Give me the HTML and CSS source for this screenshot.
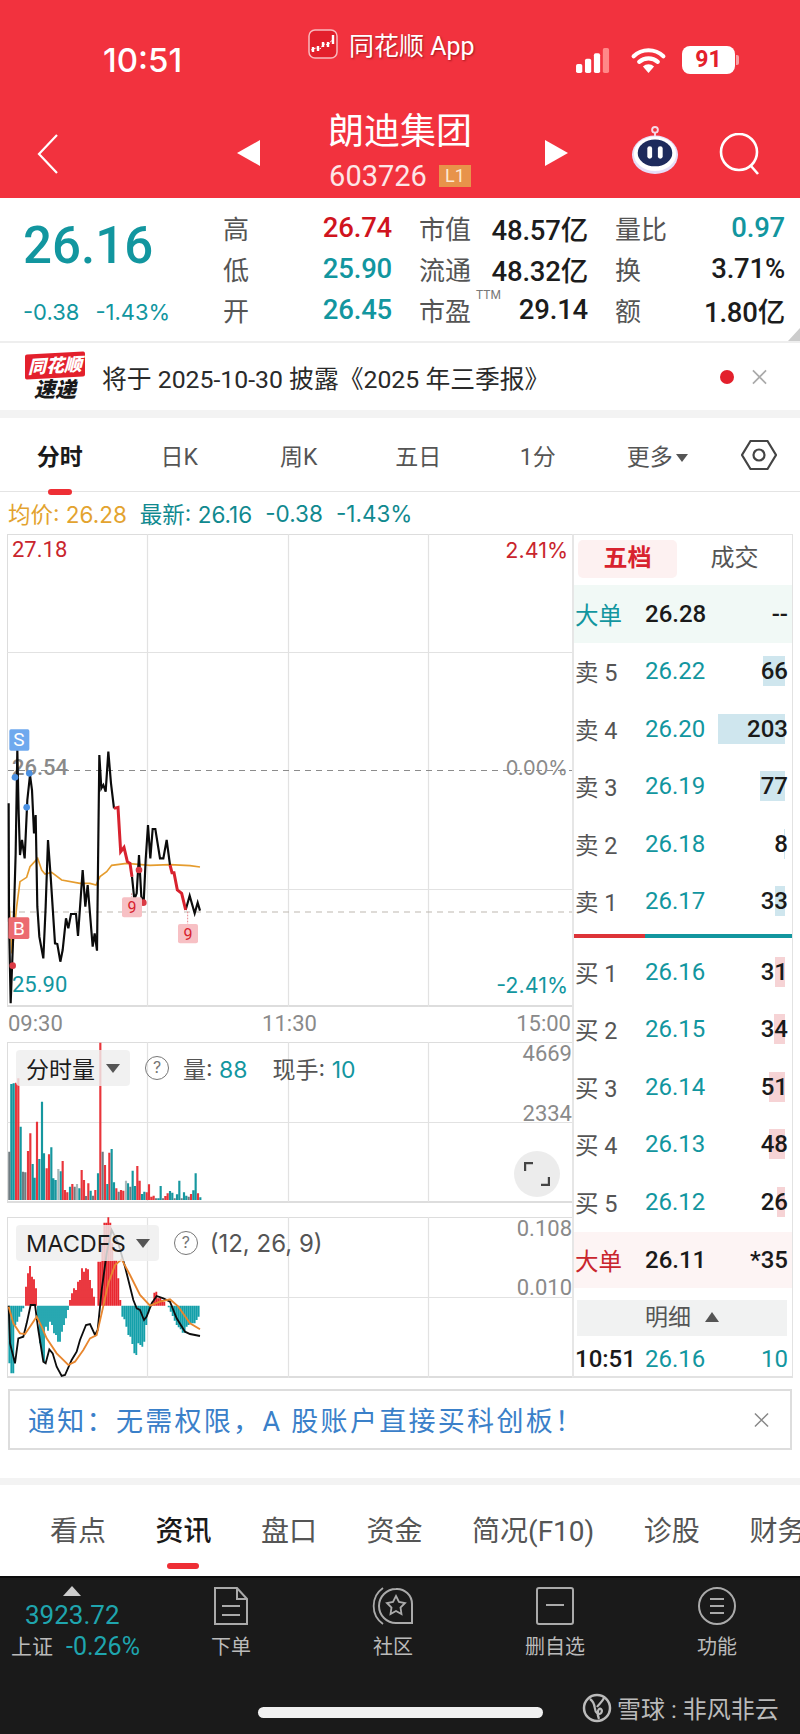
FILE: index.html
```html
<!DOCTYPE html>
<html lang="zh">
<head>
<meta charset="utf-8">
<title>朗迪集团</title>
<link rel="stylesheet" href="styles.css">
</head>
<body>
<div class="page">
<header class="head">
  <div class="status">
    <span class="time">10:51</span>
    <div class="app">
      <svg class="app-icon" viewBox="0 0 30 30"><rect x="1" y="1" width="28" height="28" rx="6" fill="#e3202c" stroke="#f9b9bd" stroke-width="1.5"/><path d="M3 21l5-2 4 1 4-5 4 1 5-6" fill="none" stroke="#fff" stroke-width="1" stroke-dasharray="2 1"/><path d="M5 18v5M10 17v5M15 13v5M20 13v5M25 6v9" stroke="#fff" stroke-width="2.4"/></svg>
      <span>同花顺 App</span>
    </div>
    <div class="sys">
      <svg class="signal" viewBox="0 0 38 28"><rect x="0" y="18" width="7" height="10" rx="2" fill="#fff"/><rect x="10" y="12" width="7" height="16" rx="2" fill="#fff"/><rect x="20" y="6" width="7" height="22" rx="2" fill="#fff"/><rect x="30" y="0" width="7" height="28" rx="2" fill="#f88"/></svg>
      <svg class="wifi" viewBox="0 0 36 28"><path d="M2 10a23 23 0 0 1 32 0M8 16a15 15 0 0 1 20 0" fill="none" stroke="#fff" stroke-width="4.5" stroke-linecap="round"/><path d="M18 28l-6-7a9 9 0 0 1 12 0z" fill="#fff"/></svg>
      <div class="batt"><span class="batt-body">91</span><span class="batt-tip"></span></div>
    </div>
  </div>
  <div class="nav">
    <svg class="back" viewBox="0 0 22 40"><path d="M20 1L2 20l18 19" fill="none" stroke="#fff" stroke-width="2.2"/></svg>
    <svg class="tri tri-l" viewBox="0 0 23 26"><path d="M23 0v26L0 13z" fill="#fff"/></svg>
    <div class="title">
      <div class="name">朗迪集团</div>
      <div class="code"><span>603726</span><b class="l1">L1</b></div>
    </div>
    <svg class="tri tri-r" viewBox="0 0 23 26"><path d="M0 0v26l23-13z" fill="#fff"/></svg>
    <svg class="robot" viewBox="0 0 50 50"><circle cx="25" cy="4" r="3" fill="none" stroke="#f5d8e6" stroke-width="2"/><path d="M25 7v4" stroke="#f5d8e6" stroke-width="2"/><ellipse cx="25" cy="30" rx="24" ry="20" fill="#e6def8"/><ellipse cx="25" cy="29" rx="22" ry="18" fill="#fff"/><ellipse cx="25" cy="28" rx="18" ry="14" fill="#1d2a5c"/><rect x="17" y="21" width="5" height="13" rx="2.5" fill="#fff"/><rect x="28" y="21" width="5" height="13" rx="2.5" fill="#fff"/></svg>
    <svg class="search" viewBox="0 0 42 42"><circle cx="20" cy="19" r="18" fill="none" stroke="#fff" stroke-width="2.6"/><path d="M32 33l7 8" stroke="#fff" stroke-width="2.6"/></svg>
  </div>
</header>

<section class="quote">
  <div class="last">
    <div class="big">26.16</div>
    <div class="chg"><span>-0.38</span><span>-1.43%</span></div>
  </div>
  <div class="stats">
    <div class="st"><i>高</i><b class="red">26.74</b></div>
    <div class="st"><i>市值</i><b>48.57亿</b></div>
    <div class="st"><i>量比</i><b class="teal">0.97</b></div>
    <div class="st"><i>低</i><b class="teal">25.90</b></div>
    <div class="st"><i>流通</i><b>48.32亿</b></div>
    <div class="st"><i>换</i><b>3.71%</b></div>
    <div class="st"><i>开</i><b class="teal">26.45</b></div>
    <div class="st"><i>市盈<sup class="ttm">TTM</sup></i><b>29.14</b></div>
    <div class="st"><i>额</i><b>1.80亿</b></div>
  </div>
  <span class="corner"></span>
</section>

<section class="notice">
  <div class="logo"><span class="logo-top">同花顺</span><span class="logo-bot">速递</span></div>
  <div class="notice-text">将于 2025-10-30 披露《2025 年三季报》</div>
  <span class="dot"></span>
  <svg class="x x-grey" viewBox="0 0 16 16"><path d="M1 1l14 14M15 1L1 15" stroke="#aaa" stroke-width="1.8"/></svg>
</section>

<nav class="tabs">
  <div class="tab on">分时</div>
  <div class="tab">日K</div>
  <div class="tab">周K</div>
  <div class="tab">五日</div>
  <div class="tab">1分</div>
  <div class="tab">更多<span class="caret-s"></span></div>
  <svg class="hex" viewBox="0 0 36 32"><path d="M9.500 2h17L35 16l-8.500 14h-17L1 16z" fill="none" stroke="#444" stroke-width="2.200"/><circle cx="18" cy="16" r="5.500" fill="none" stroke="#444" stroke-width="2.200"/></svg>
</nav>

<div class="avg"><span class="orange">均价: 26.28</span><span class="tl">最新: 26.16</span><span class="tl">-0.38</span><span class="tl">-1.43%</span></div>

<main class="main">
  <div class="left">
    <div class="chart pc">
      <svg class="plot" viewBox="0 0 565 473" width="565" height="473">
        <g transform="translate(-7,-534)" fill="none">
          <path d="M147.500 534V1007M288.500 534V1007M428.500 534V1007M7 652.500H572M7 889.500H572" stroke="#e2e2e2" stroke-width="1.200"/>
          <path d="M8 770.500H572" stroke="#8c8c8c" stroke-width="1.200" stroke-dasharray="6 5"/>
          <path d="M8 912H572" stroke="#bdb8b0" stroke-width="1.200" stroke-dasharray="6 5"/>
        </g>
        <text class="l-gray" x="5" y="241">26.54</text>
        <g transform="translate(-7,186) scale(.33333)" fill="none">
          <path d="M28 560L36 700L50 560L60 485L80 472L90 440L113 415L125 450L135 462L155 457L185 480L240 490L270 490L288 495L300 470L320 455L335 436L380 430L450 436L510 434L570 437L600 441" stroke="#e59c2e" stroke-width="5"/>
          <path d="M26 250L27 600L32 850L40 640L47 400L52 90L56 280L60 405L66 360L74 415L82 240L90 165L96 210L102 340L107 285L112 560L118 650L130 715L137 560L144 360L152 470L165 670L172 672L181 725L188 690L198 595L205 625L213 582L228 582L234 648L248 450L256 560L263 495L278 680L284 640L291 692L298 105L304 205L310 195L317 215L325 95L333 190L342 265M396 470L403 538L410 520L417 405L424 530L431 548L437 420L444 315L451 415L458 327L466 327L480 415L490 415L500 360L510 435M557 570L569 527L584 580L593 548L600 572" stroke="#0b0b0b" stroke-width="6.500"/>
          <path d="M342 265L354 262L362 395L372 382L382 425L390 430L396 470M510 435L516 458L522 458L532 510L545 520L557 570" stroke="#d8222e" stroke-width="9"/>
          <path d="M563 575V612M395 520V532" stroke="#e8858c" stroke-width="3" stroke-dasharray="5 4"/>
          <g fill="#4a90e2"><circle cx="45" cy="172" r="10"/><circle cx="88" cy="160" r="10"/><circle cx="80" cy="262" r="10"/></g>
          <g fill="#da3a44"><circle cx="38" cy="737" r="10"/><circle cx="417" cy="450" r="10"/><circle cx="430" cy="548" r="10"/></g>
          <rect x="28" y="28" width="60" height="64" rx="5" fill="#6fa9ee"/>
          <rect x="25" y="592" width="63" height="65" rx="5" fill="#ec6b70"/>
          <rect x="366" y="532" width="60" height="60" rx="6" fill="#f7c0c4"/>
          <rect x="534" y="612" width="60" height="58" rx="6" fill="#f7c0c4"/>
        </g>
        <text class="mk" x="12" y="212">S</text>
        <text class="mk" x="12" y="401">B</text>
        <text class="nine" x="125" y="379">9</text>
        <text class="nine" x="181" y="406">9</text>
      </svg>
      <span class="lb lb-tl red2">27.18</span>
      <span class="lb lb-bl tl">25.90</span>
      <span class="lb wide lb-tr red2">2.41%</span>
      <span class="lb wide lb-mr gr">0.00%</span>
      <span class="lb wide lb-br tl">-2.41%</span>
    </div>
    <div class="times"><span>09:30</span><span>11:30</span><span>15:00</span></div>
    <div class="chart vc">
      <svg class="plot" viewBox="0 0 565 161" width="565" height="161">
        <g transform="translate(-7,-1042)"><path d="M147.500 1042V1202M288.500 1042V1202M428.500 1042V1202M7 1122.500H572" stroke="#e2e2e2" stroke-width="1.200" fill="none"/></g>
        <g transform="translate(-7,-12) scale(.33333)" fill="none" stroke-width="6.500">
          <path stroke="#e9353b" d="M48 510V158M55 510V145M84 510V363M91 510V310M111 510V275M140 510V415M147 510V373M188 510V393M195 510V480M202 510V487M217 510V462M245 510V420M252 510V450M265 510V460M286 510V480M301 510V38M315 510V405M328 510V368M349 510V475M363 510V480M370 510V482M412 510V408M419 510V452M440 510V487M447 510V463M454 510V500M461 510V497M496 510V498M503 510V490M573 510V492M594 510V490"/>
          <path stroke="#16979f" d="M34 510V162M41 510V160M62 510V290M98 510V402M104 510V443M118 510V387M126 510V215M132 510V370M154 510V352M160 510V445M167 510V450M182 510V424M210 510V470M238 510V475M272 510V482M294 510V430M322 510V462M335 510V357M342 510V457M384 510V460M398 510V422M405 510V468M426 510V492M433 510V485M475 510V505M482 510V468M510 510V483M517 510V488M531 510V493M538 510V452M552 510V487M559 510V497M580 510V481M587 510V430M601 510V502"/>
          <path stroke="#6f7b80" d="M28 510V365M69 510V425M76 510V427M224 510V470M258 510V498M279 510V497M308 510V365M356 510V485M391 510V470M468 510V505M489 510V505M524 510V505M545 510V505M566 510V500"/>
          <path stroke="#a9b8ba" d="M175 510V417M231 510V462M378 510V452"/>
        </g>
      </svg>
      <div class="ctl ctl-v">
        <div class="chip">分时量<span class="caret"></span></div>
        <span class="help">?</span>
        <span>量: <em class="tl">88</em></span>
        <span class="ml">现手: <em class="tl">10</em></span>
      </div>
      <span class="lb lb-v1 gr">4669</span>
      <span class="lb lb-v2 gr">2334</span>
      <div class="full"><svg viewBox="0 0 26 24" width="26" height="24"><path d="M1 9V1h8M25 15v8h-8" fill="none" stroke="#444" stroke-width="2.400"/></svg></div>
    </div>
    <div class="chart mc">
      <svg class="plot" viewBox="0 0 565 161" width="565" height="161">
        <g transform="translate(-7,-1217)"><path d="M147.500 1217V1378M288.500 1217V1378M7 1297.500H572M428.500 1217V1378" stroke="#e2e2e2" stroke-width="1.200" fill="none"/></g>
        <g transform="translate(-7,-7) scale(.33333)" fill="none" stroke-width="5.500">
          <path stroke="#14a0aa" d="M28 287V460M34 287V490M40 287V490M46 287V345M52 287V335M58 287V320M64 287V305M70 287V295M114 287V330M120 287V400M126 287V430M132 287V455M138 287V350M144 287V362M150 287V335M156 287V345M162 287V370M168 287V375M174 287V395M180 287V395M186 287V365M192 287V345M198 287V325M204 287V300M367 287V320M373 287V328M379 287V350M385 287V375M391 287V380M397 287V402M403 287V430M409 287V435M415 287V400M421 287V405M427 287V410M433 287V395M439 287V345M445 287V310M451 287V292M506 287V292M512 287V305M518 287V318M524 287V332M530 287V345M536 287V352M542 287V358M548 287V368M554 287V368M560 287V350M566 287V345M572 287V340M578 287V340M584 287V340M590 287V330M596 287V320"/>
          <path stroke="#e9272f" d="M78 287V230M84 287V190M90 287V168M96 287V200M102 287V208M108 287V235M210 287V270M216 287V250M222 287V235M228 287V240M234 287V215M240 287V210M246 287V175M252 287V185M258 287V175M264 287V178M270 287V210M276 287V235M282 287V260M295 287V155M301 287V155M307 287V100M313 287V38M319 287V38M325 287V22M331 287V38M337 287V100M343 287V150M349 287V150M355 287V205M361 287V270M457 287V275M463 287V248M469 287V245M475 287V265M481 287V262M487 287V270M493 287V275"/>
          <path stroke="#0d0d0d" stroke-width="5.500" d="M26 287L30 400L45 460L55 385L70 380L80 340L92 285L105 285L115 360L130 455L137 460L148 418L158 430L170 470L185 498L195 495L215 450L230 425L240 390L258 345L270 342L285 375L293 360L305 240L320 130L335 60L355 100L375 170L400 270L410 295L420 300L432 330L440 320L455 280L470 258L490 265L510 275L530 325L555 365L570 372L585 375L600 378"/>
          <path stroke="#e8862e" stroke-width="5.500" d="M26 290L40 340L60 370L75 372L90 350L110 320L125 350L140 385L170 430L205 465L225 455L250 420L270 385L290 375L305 310L325 220L345 165L365 148L390 195L420 255L450 287L480 275L510 268L535 290L570 340L600 358"/>
        </g>
      </svg>
      <div class="ctl ctl-m">
        <div class="chip chip-m">MACDFS<span class="caret"></span></div>
        <span class="help">?</span>
        <span class="params">(12, 26, 9)</span>
      </div>
      <span class="lb lb-m1 gr">0.108</span>
      <span class="lb lb-m2 gr">0.010</span>
    </div>
  </div>

  <aside class="book">
    <div class="book-tabs"><div class="bt on">五档</div><div class="bt">成交</div></div>
    <div class="row big-g"><span class="tl">大单</span><b class="k">26.28</b><b class="k v">--</b></div>
    <div class="row"><span>卖 5</span><b class="tl">26.22</b><b class="k v"><u class="bar sell b66"></u>66</b></div>
    <div class="row"><span>卖 4</span><b class="tl">26.20</b><b class="k v"><u class="bar sell b203"></u>203</b></div>
    <div class="row"><span>卖 3</span><b class="tl">26.19</b><b class="k v"><u class="bar sell b77"></u>77</b></div>
    <div class="row"><span>卖 2</span><b class="tl">26.18</b><b class="k v"><u class="bar sell b8"></u>8</b></div>
    <div class="row"><span>卖 1</span><b class="tl">26.17</b><b class="k v"><u class="bar sell b33"></u>33</b></div>
    <div class="split"><i></i><i></i></div>
    <div class="row"><span>买 1</span><b class="tl">26.16</b><b class="k v"><u class="bar buy b31"></u>31</b></div>
    <div class="row"><span>买 2</span><b class="tl">26.15</b><b class="k v"><u class="bar buy b34"></u>34</b></div>
    <div class="row"><span>买 3</span><b class="tl">26.14</b><b class="k v"><u class="bar buy b51"></u>51</b></div>
    <div class="row"><span>买 4</span><b class="tl">26.13</b><b class="k v"><u class="bar buy b48"></u>48</b></div>
    <div class="row"><span>买 5</span><b class="tl">26.12</b><b class="k v"><u class="bar buy b26"></u>26</b></div>
    <div class="row big-r"><span class="red2">大单</span><b class="k">26.11</b><b class="k v">*35</b></div>
    <div class="detail">明细<span class="caret-up"></span></div>
    <div class="row last-r"><b class="k">10:51</b><b class="tl">26.16</b><b class="tl v">10</b></div>
  </aside>
</main>

<div class="alert">
  <span class="alert-text">通知：无需权限，A 股账户直接买科创板！</span>
  <svg class="x" viewBox="0 0 16 16"><path d="M1 1l14 14M15 1L1 15" stroke="#888" stroke-width="1.600"/></svg>
</div>

<div class="band2"></div>

<nav class="tabs2">
  <span>看点</span><span class="on">资讯</span><span>盘口</span><span>资金</span><span>简况(F10)</span><span>诊股</span><span>财务</span>
</nav>

<footer class="foot">
  <div class="foot-top">
    <div class="index">
      <span class="up"></span>
      <div class="idx-num">3923.72</div>
      <div class="idx-row"><span>上证</span><b>-0.26%</b></div>
    </div>
    <div class="fitem">
      <svg viewBox="0 0 36 38" width="36" height="38"><path d="M2 1h22l10 11v25H2zM24 1v11h10M9 19h18M9 28h18" fill="none" stroke="#aaa" stroke-width="2"/></svg>
      <span>下单</span>
    </div>
    <div class="fitem">
      <svg viewBox="0 0 42 38" width="42" height="38"><path d="M11 1a22 22 0 0 0 0 36" fill="none" stroke="#aaa" stroke-width="1.800"/><path d="M24 2a15 15 0 0 1 16 15v19H24a17 17 0 0 1 0-34z" fill="none" stroke="#aaa" stroke-width="2"/><path d="M24 9l3 6 6 1-4.500 4.500 1 6.500-5.500-3-5.500 3 1-6.500L15 16l6-1z" fill="none" stroke="#aaa" stroke-width="1.800"/></svg>
      <span>社区</span>
    </div>
    <div class="fitem">
      <svg viewBox="0 0 38 38" width="38" height="38"><rect x="1" y="1" width="36" height="36" rx="2" fill="none" stroke="#aaa" stroke-width="2"/><path d="M10 18h18" stroke="#aaa" stroke-width="2"/></svg>
      <span>删自选</span>
    </div>
    <div class="fitem">
      <svg viewBox="0 0 38 38" width="38" height="38"><circle cx="19" cy="19" r="18" fill="none" stroke="#aaa" stroke-width="2"/><path d="M12 12h14M12 19h14M12 26h14" stroke="#aaa" stroke-width="2"/></svg>
      <span>功能</span>
    </div>
  </div>
  <div class="foot-bot">
    <div class="home"></div>
    <div class="mark">
      <svg viewBox="0 0 30 30" width="30" height="30"><circle cx="15" cy="15" r="13" fill="none" stroke="#bbb" stroke-width="2.500"/><path d="M8 6c7 5 3 11 7 14s6-2 4-4-5 3-2 10M22 5c-2 4-5 6-7 9" fill="none" stroke="#bbb" stroke-width="2.200"/></svg>
      <span>雪球 : 非风非云</span>
    </div>
  </div>
</footer>
</div>
</body>
</html>
```

FILE: styles.css
```css
* { box-sizing: border-box; }
html, body { margin: 0; padding: 0; background: #fff; }
body { font-family: Roboto, "Noto Sans CJK SC", sans-serif; color: #1c1c1c; }
.page { width: 800px; height: 1734px; overflow: hidden; position: relative; }
i, em, u { font-style: normal; text-decoration: none; }

.red { color: #d0141e; }
.red2 { color: #c9252d; }
.teal, .tl { color: #12969f; }
.gr { color: #8a8a8a; }
.orange { color: #e3a32f; }

/* header */
.head { background: #f2323e; height: 198px; color: #fff; }
.status { height: 112px; padding: 8px 0 0 103px; display: flex; align-items: center; }
.time { font-size: 33px; font-weight: 500; width: 205px; font-family: Inter, sans-serif; }
.app { display: flex; align-items: center; gap: 11px; font-size: 25px; margin-bottom: 32px; width: 265px; text-shadow: 1px 1px 2px rgba(90,0,0,.5); }
.app-icon { width: 30px; height: 30px; }
.sys { display: flex; align-items: center; gap: 17px; }
.signal { width: 40px; height: 25px; }
.wifi { width: 37px; height: 26px; }
.batt { display: flex; align-items: center; gap: 1px; margin-left: -2px; }
.batt-body { width: 53px; height: 28px; background: #fff; border-radius: 8px; color: #e3202c; font-size: 23px; font-weight: 700; line-height: 28px; text-align: center; }
.batt-tip { width: 3px; height: 10px; background: #f7a0a5; border-radius: 0 2px 2px 0; }

.nav { height: 86px; display: flex; align-items: flex-start; }
.back { width: 22px; height: 40px; margin: 22px 0 0 37px; }
.tri { width: 23px; height: 26px; margin-top: 28px; }
.tri-l { margin-left: 178px; }
.title { width: 285px; text-align: center; }
.name { font-size: 36px; line-height: 40px; margin-left: -5px; }
.code { display: flex; justify-content: center; align-items: center; gap: 12px; margin: 7px 0 0 -5px; font-size: 29px; color: #fde6e7; height: 34px; }
.l1 { width: 32px; height: 22px; background: #e8934a; color: #fde9d4; font-size: 18px; font-weight: 400; line-height: 22px; text-align: center; }
.robot { width: 50px; height: 48px; margin: 14px 0 0 62px; }
.search { width: 42px; height: 42px; margin: 21px 0 0 39px; }

/* quote */
.quote { height: 145px; border-bottom: 2px solid #eee; display: flex; position: relative; }
.last { width: 223px; padding: 18px 0 0 23px; }
.big { font-size: 51px; font-weight: 500; color: #12969f; line-height: 60px; }
.chg { display: flex; gap: 16px; margin-top: 22px; color: #12969f; font-size: 22px; line-height: 28px; font-family: Inter, sans-serif; }
.stats { display: grid; grid-template-columns: 169px 169px 170px; column-gap: 27px; grid-auto-rows: 41px; padding-top: 9px; }
.st { display: flex; justify-content: space-between; align-items: center; font-size: 25px; }
.st i { color: #555; font-size: 26px; position: relative; }
.st b { font-weight: 500; font-size: 27.500px; letter-spacing: -.2px; }
.ttm { position: absolute; left: 57px; top: -3px; font-size: 12px; line-height: 14px; color: #777; }
.corner { position: absolute; right: 0; bottom: 0; border-style: solid; border-width: 0 0 13px 12px; border-color: transparent transparent #ccc transparent; }

/* notice */
.notice { height: 67px; display: flex; align-items: center; padding-left: 25px; }
.logo { width: 60px; display: flex; flex-direction: column; align-items: center; font-style: italic; font-weight: 900; line-height: 1; }
.logo-top { background: #e3202c; color: #fff; font-size: 18px; width: 60px; height: 25px; line-height: 25px; text-align: center; border-radius: 2px; transform: skewY(-3deg); }
.logo-bot { font-size: 21px; margin-top: 2px; color: #1a1a1a; }
.notice-text { margin-left: 17px; font-size: 24.800px; width: 618px; white-space: nowrap; color: #2a2a2a; }
.dot { width: 14px; height: 14px; border-radius: 50%; background: #e3202c; }
.x { width: 15px; height: 16px; }
.x-grey { margin-left: 18px; }

/* tabs */
.tabs { height: 82px; border-top: 8px solid #f3f3f3; border-bottom: 1px solid #e4e4e4; display: flex; align-items: center; }
.tab { width: 119.500px; text-align: center; font-size: 23px; color: #555; position: relative; }
.tab.on { color: #1a1a1a; font-weight: 700; }
.tab.on::after { content: ""; position: absolute; left: 48px; bottom: -23px; width: 24px; height: 6px; border-radius: 3px; background: #ee2f35; }
.caret-s { display: inline-block; border: 6px solid transparent; border-top: 8px solid #555; border-bottom: 0; margin-left: 3px; vertical-align: 3px; }
.hex { width: 36px; height: 32px; margin-left: 24px; }

.avg { height: 42px; display: flex; align-items: center; padding-left: 8px; font-family: Inter, "Noto Sans CJK SC", sans-serif; font-size: 22.500px; gap: 13px; }
.avg .tl { color: #10898f; }

/* main */
.main { display: flex; padding-left: 7px; height: 844px; }
.left { width: 565px; }
.chart { position: relative; }
.plot { display: block; }
.pc { height: 473px; border-top: 1.500px solid #ddd; border-left: 1.500px solid #ddd; border-bottom: 2px solid #ddd; }
.pc .plot { margin: -1.500px 0 0 -1.500px; }
.vc { height: 161px; margin-top: 2px; border-top: 1.500px solid #ddd; border-left: 1.500px solid #ddd; border-bottom: 2px solid #ddd; }
.vc .plot { margin: -1.500px 0 0 -1.500px; }
.mc { height: 161px; margin-top: 14px; border-top: 1.500px solid #ddd; border-left: 1.500px solid #ddd; border-bottom: 2px solid #ddd; }
.mc .plot { margin: -1.500px 0 0 -1.500px; }
.l-gray { font: 500 22px Roboto, sans-serif; fill: #8a8a8a; }
.mk { font: 400 19px Roboto, sans-serif; fill: #fff; text-anchor: middle; }
.nine { font: 400 16px Roboto, sans-serif; fill: #d8222e; text-anchor: middle; }

.lb { position: absolute; font-size: 22px; line-height: 26px; }
.wide { font-family: Inter, sans-serif; font-size: 21.500px; }
.lb-tl { left: 4px; top: 2px; }
.lb-bl { left: 4px; top: 437px; }
.lb-tr { right: 4px; top: 2px; }
.lb-mr { right: 4px; top: 220px; font-size: 20px; }
.lb-br { right: 4px; top: 437px; }
.lb-v1 { right: 0; top: -2px; }
.lb-v2 { right: 0; top: 58px; }
.lb-m1 { right: 0; top: -2px; }
.lb-m2 { right: 0; top: 57px; }

.times { height: 33px; display: flex; justify-content: space-between; align-items: center; color: #8a8a8a; font-size: 22px; padding: 0 1px; }

.ctl { position: absolute; left: 8px; display: flex; align-items: center; font-family: Inter, "Noto Sans CJK SC", sans-serif; font-size: 23px; color: #555; white-space: nowrap; }
.ctl-v { top: 7px; }
.ctl-m { top: 7px; }
.chip { height: 36px; padding: 0 10px; background: rgba(238,238,238,.82); border-radius: 4px; color: #1c1c1c; display: flex; align-items: center; gap: 8px; font-size: 23px; }
.chip-m { font-size: 23.500px; padding-right: 9px; gap: 7px; }
.caret { border: 7px solid transparent; border-top: 9px solid #555; border-bottom: 0; margin-left: 3px; }
.help { width: 24px; height: 24px; margin: 0 14px 0 15px; border: 1.500px solid #777; border-radius: 50%; font-size: 16px; line-height: 21px; text-align: center; color: #777; }
.ml { margin-left: 25px; }
.params { font-size: 24px; margin-left: -2px; }
.full { position: absolute; right: 12px; top: 108px; width: 46px; height: 46px; border-radius: 50%; background: #ececec; display: flex; align-items: center; justify-content: center; }

/* order book */
.book { width: 221px; height: 844px; border: 1.500px solid #e2e2e2; border-left: 2.500px solid #e6e6e6; border-bottom-width: 2px; }
.book-tabs { display: flex; height: 50px; padding: 5px 0 0 4px; }
.bt { width: 99px; height: 38px; text-align: center; font-size: 24px; line-height: 37px; color: #555; border-radius: 5px; }
.bt.on { background: #fdf1f1; color: #d8222e; font-weight: 700; }
.bt + .bt { margin-left: 8px; }
.row { height: 57.500px; display: grid; grid-template-columns: 70px 1fr auto; align-items: center; padding: 0 4px 0 1px; font-size: 23.500px; color: #555; }
.row span { white-space: nowrap; }
.row b { font-weight: 500; font-size: 24px; }
.row b.tl { font-weight: 400; }
.k { color: #1a1a1a; }
.v { position: relative; text-align: right; z-index: 0; }
.bar { position: absolute; right: 3px; top: -1px; bottom: -1px; z-index: -1; display: block; }
.sell { background: #cfe6ee; }
.buy { background: #f6d3d5; }
.b66 { width: 22px; } .b203 { width: 67px; } .b77 { width: 25px; } .b8 { width: 1px; } .b33 { width: 10px; }
.b31 { width: 10px; } .b34 { width: 11px; } .b51 { width: 16px; } .b48 { width: 16px; } .b26 { width: 8px; }
.big-g { background: #f1f9f6; }
.big-r { background: #fdf4f4; height: 56px; margin-top: 1px; }
.big-r span { color: #c9252d; }
.split { display: flex; height: 4px; margin: 4px 0 5px; }
.split i:first-child { width: 71px; background: #dd3338; }
.split i:last-child { flex: 1; background: #12969f; }
.detail { margin: 12px 5px 0 3px; height: 36px; background: #f1f2f2; text-align: center; font-size: 23px; line-height: 36px; color: #555; }
.caret-up { display: inline-block; border: 7px solid transparent; border-bottom: 10px solid #555; border-top: 0; margin-left: 14px; vertical-align: 3px; }
.last-r { height: 46px; }

/* alert */
.alert { margin: 11px 8px 0; height: 61px; border: 2px solid #ddd; display: flex; align-items: center; justify-content: space-between; padding: 0 21px 0 18px; }
.alert-text { font-size: 27px; color: #3a80c9; letter-spacing: 2.300px; white-space: nowrap; }
.band2 { height: 7px; margin-top: 28px; background: #f3f3f3; }

.tabs2 { height: 91px; display: flex; gap: 49.500px; padding: 21px 0 0 50px; font-size: 28px; color: #555; white-space: nowrap; line-height: 52px; }
.tabs2 .on { color: #1a1a1a; font-weight: 500; position: relative; }
.tabs2 .on::after { content: ""; position: absolute; left: 11px; top: 57px; width: 32px; height: 6px; border-radius: 3px; background: #ee2f35; }

/* footer */
.foot { height: 158px; background: #1a1a1a; color: #bbb; border-top: 2px solid #0c0c0c; }
.foot-top { display: flex; height: 112px; }
.index { width: 150px; padding: 8px 0 0 11px; }
.up { display: block; width: 0; margin-left: 52px; border: 9px solid transparent; border-bottom: 10px solid #ccc; border-top: 0; }
.idx-num { color: #1fa5ae; font-size: 26px; line-height: 34px; margin: 2px 0 0 14px; }
.idx-row { display: flex; align-items: center; gap: 13px; font-size: 21px; line-height: 30px; }
.idx-row b { color: #1fa5ae; font-weight: 400; font-size: 25px; }
.fitem { display: flex; flex-direction: column; align-items: center; width: 162px; font-size: 20px; padding-top: 9px; gap: 6px; }
.foot-bot { display: flex; align-items: flex-start; padding-left: 258px; }
.home { width: 285px; height: 11px; margin-top: 17px; border-radius: 6px; background: #f0f0f0; }
.mark { display: flex; align-items: center; gap: 5px; margin-left: 39px; font-size: 24px; color: #bbb; white-space: nowrap; }
```
